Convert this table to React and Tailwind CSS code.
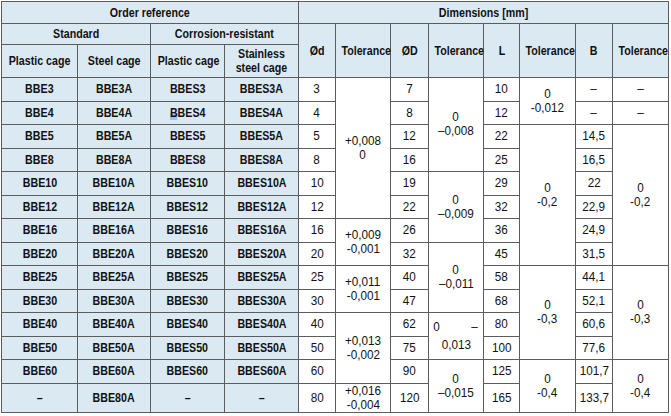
const rows = [
  { o: ["BBE3", "BBE3A", "BBES3", "BBES3A"], d: "3", D: "7", L: "10", B: "–" },
  { o: ["BBE4", "BBE4A", "BBES4", "BBES4A"], d: "4", D: "8", L: "12", B: "–" },
  { o: ["BBE5", "BBE5A", "BBES5", "BBES5A"], d: "5", D: "12", L: "22", B: "14,5" },
  { o: ["BBE8", "BBE8A", "BBES8", "BBES8A"], d: "8", D: "16", L: "25", B: "16,5" },
  { o: ["BBE10", "BBE10A", "BBES10", "BBES10A"], d: "10", D: "19", L: "29", B: "22" },
  { o: ["BBE12", "BBE12A", "BBES12", "BBES12A"], d: "12", D: "22", L: "32", B: "22,9" },
  { o: ["BBE16", "BBE16A", "BBES16", "BBES16A"], d: "16", D: "26", L: "36", B: "24,9" },
  { o: ["BBE20", "BBE20A", "BBES20", "BBES20A"], d: "20", D: "32", L: "45", B: "31,5" },
  { o: ["BBE25", "BBE25A", "BBES25", "BBES25A"], d: "25", D: "40", L: "58", B: "44,1" },
  { o: ["BBE30", "BBE30A", "BBES30", "BBES30A"], d: "30", D: "47", L: "68", B: "52,1" },
  { o: ["BBE40", "BBE40A", "BBES40", "BBES40A"], d: "40", D: "62", L: "80", B: "60,6" },
  { o: ["BBE50", "BBE50A", "BBES50", "BBES50A"], d: "50", D: "75", L: "100", B: "77,6" },
  { o: ["BBE60", "BBE60A", "BBES60", "BBES60A"], d: "60", D: "90", L: "125", B: "101,7" },
  { o: ["–", "BBE80A", "–", "–"], d: "80", D: "120", L: "165", B: "133,7" },
];

// tolerance cells keyed by the row they start in
const tolD = {
  0: { span: 6, t: ["+0,008", "0"] },
  6: { span: 2, t: ["+0,009", "-0,001"] },
  8: { span: 2, t: ["+0,011", "-0,001"] },
  10: { span: 3, t: ["+0,013", "-0,002"] },
  13: { span: 1, t: ["+0,016", "-0,004"] },
};
const tolDD = {
  0: { span: 4, t: ["0", "–0,008"] },
  4: { span: 3, t: ["0", "–0,009"] },
  7: { span: 3, t: ["0", "–0,011"] },
  10: { span: 2, odd: true },
  12: { span: 2, t: ["0", "–0,015"] },
};
const tolL = {
  0: { span: 2, t: ["0", "-0,012"] },
  2: { span: 6, t: ["0", "-0,2"] },
  8: { span: 4, t: ["0", "-0,3"] },
  12: { span: 2, t: ["0", "-0,4"] },
};
const tolB = {
  0: { span: 1, t: ["–"] },
  1: { span: 1, t: ["–"] },
  2: { span: 6, t: ["0", "-0,2"] },
  8: { span: 4, t: ["0", "-0,3"] },
  12: { span: 2, t: ["0", "-0,4"] },
};

const cell = "border border-[#5c5c5c] p-0 text-center align-middle overflow-visible";
const head = `${cell} bg-[#dbeaf2] font-bold`;

// condensed look: Liberation Sans squeezed horizontally
function B({ children }) {
  return <span className="inline-block whitespace-nowrap scale-x-[0.82]">{children}</span>;
}
function R({ children }) {
  return <span className="inline-block whitespace-nowrap scale-x-[0.9]">{children}</span>;
}

function Tol({ tol }) {
  if (!tol) return null;
  if (tol.odd) {
    return (
      <td rowSpan={tol.span} className={`${cell} bg-white leading-[18px]`}>
        <div className="flex justify-between pl-[4px] pr-[5px]">
          <R>0</R>
          <R>–</R>
        </div>
        <div>
          <R>0,013</R>
        </div>
      </td>
    );
  }
  return (
    <td rowSpan={tol.span} className={`${cell} bg-white leading-[14px]`}>
      {tol.t.map((line, i) => (
        <div key={i}>
          <R>{line}</R>
        </div>
      ))}
    </td>
  );
}

export default function App() {
  return (
    <div
      className="w-[671px] h-[416px] bg-white pl-px pt-px text-[#111] text-[13px]"
      style={{ fontFamily: '"Liberation Sans", Arial, sans-serif' }}
    >
      <table className="table-fixed border-collapse w-[667px]">
        <colgroup>
          <col className="w-[76px]" />
          <col className="w-[73px]" />
          <col className="w-[74px]" />
          <col className="w-[74px]" />
          <col className="w-[37px]" />
          <col className="w-[55px]" />
          <col className="w-[38px]" />
          <col className="w-[55px]" />
          <col className="w-[36px]" />
          <col className="w-[56px]" />
          <col className="w-[37px]" />
          <col className="w-[56px]" />
        </colgroup>
        <thead>
          <tr className="h-[22px]">
            <th colSpan={4} className={head}><B>Order reference</B></th>
            <th colSpan={8} className={head}><B>Dimensions [mm]</B></th>
          </tr>
          <tr className="h-[20px]">
            <th colSpan={2} className={head}><B>Standard</B></th>
            <th colSpan={2} className={head}><B>Corrosion-resistant</B></th>
            {["Ød", "Tolerance", "ØD", "Tolerance", "L", "Tolerance", "B", "Tolerance"].map((h, i) => (
              <th key={i} rowSpan={2} className={head}><B>{h}</B></th>
            ))}
          </tr>
          <tr className="h-[33px]">
            <th className={head}><B>Plastic cage</B></th>
            <th className={head}><B>Steel cage</B></th>
            <th className={head}><B>Plastic cage</B></th>
            <th className={`${head} leading-[14px]`}>
              <B>
                Stainless
                <br />
                steel cage
              </B>
            </th>
          </tr>
        </thead>
        <tbody>
          {rows.map((r, i) => (
            <tr key={i} className={i === 13 ? "h-[28px]" : i % 2 === 0 ? "h-[24px]" : "h-[23px]"}>
              {r.o.map((o, j) => (
                <td key={j} className={`${cell} bg-[#dbeaf2] font-bold`}>
                  <B>
                    {o === "BBES4" ? (
                      <>
                        <span className="bg-[linear-gradient(to_bottom,transparent_55%,#9cc2e6_55%)]">B</span>BES4
                      </>
                    ) : (
                      o
                    )}
                  </B>
                </td>
              ))}
              <td className={`${cell} bg-white`}><R>{r.d}</R></td>
              <Tol tol={tolD[i]} />
              <td className={`${cell} bg-white`}><R>{r.D}</R></td>
              <Tol tol={tolDD[i]} />
              <td className={`${cell} bg-white`}><R>{r.L}</R></td>
              <Tol tol={tolL[i]} />
              <td className={`${cell} bg-white`}><R>{r.B}</R></td>
              <Tol tol={tolB[i]} />
            </tr>
          ))}
        </tbody>
      </table>
    </div>
  );
}
